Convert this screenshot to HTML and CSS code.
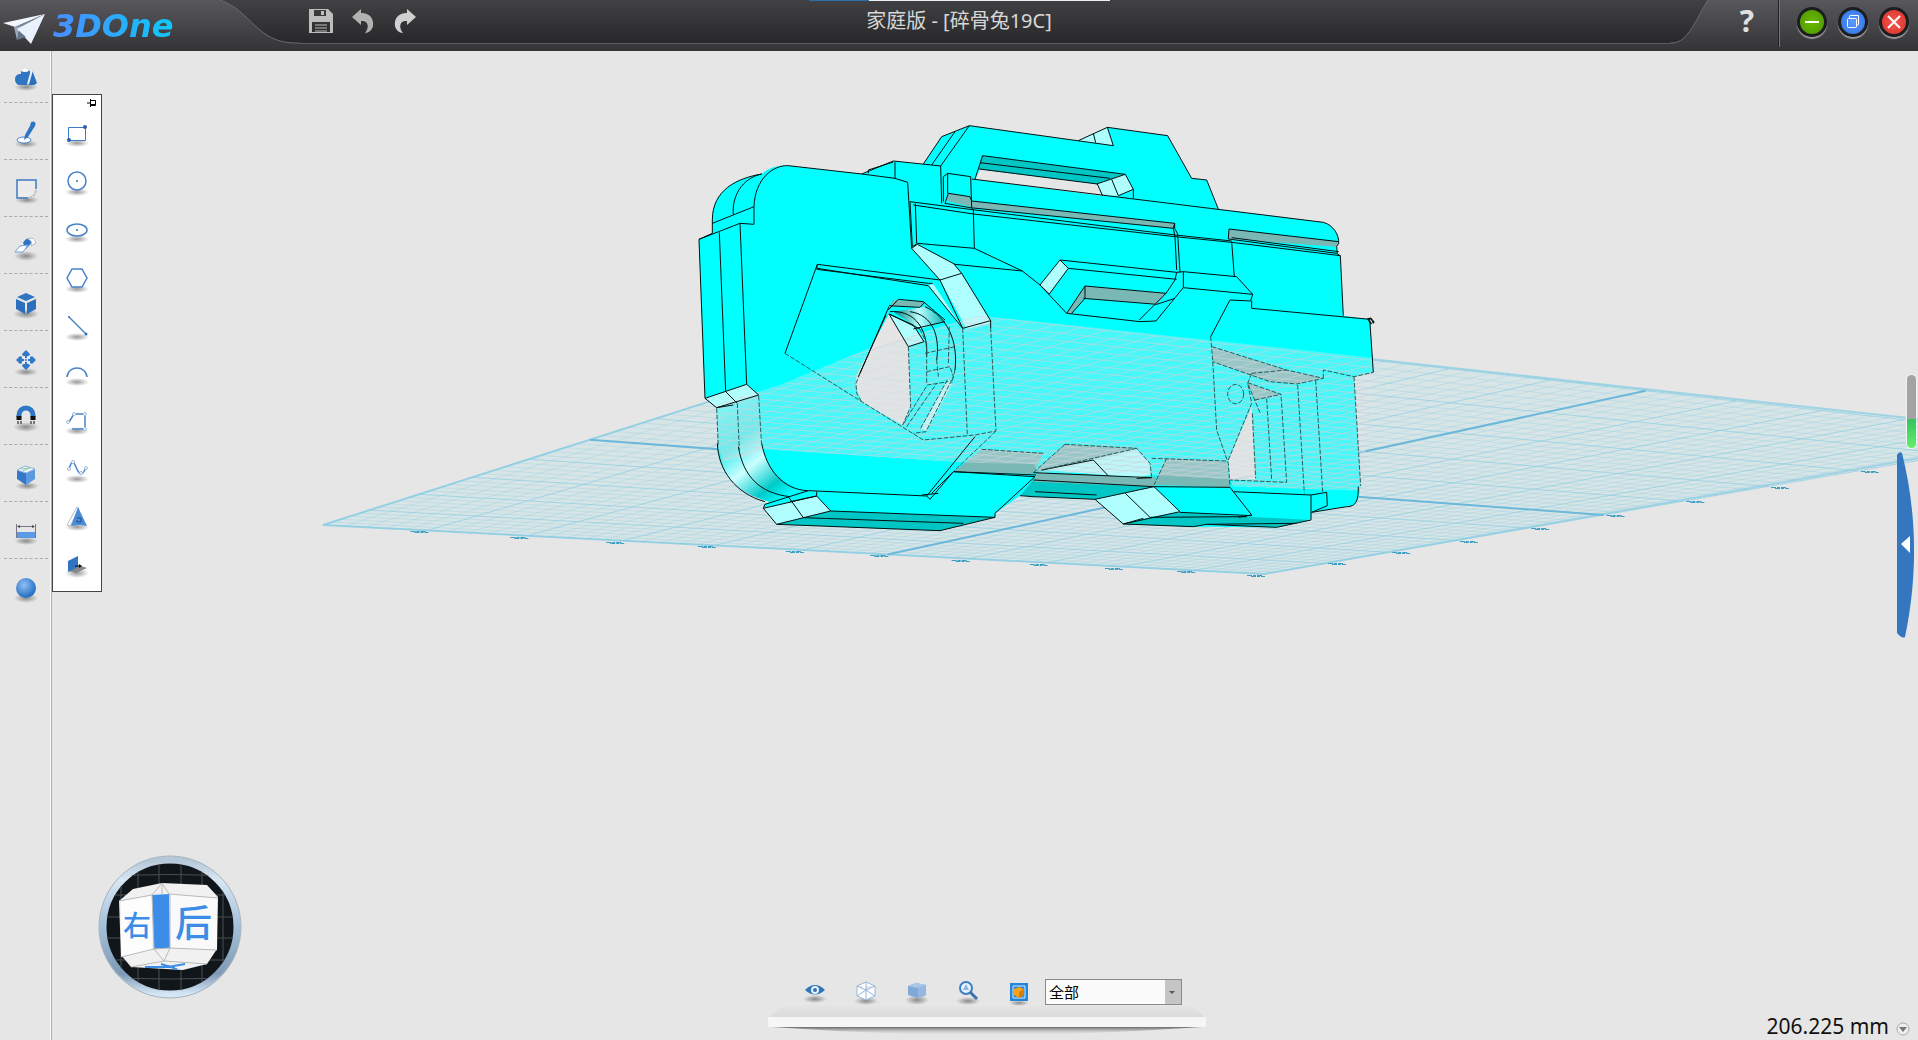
FILE: index.html
```
<!DOCTYPE html>
<html lang="zh-CN">
<head>
<meta charset="utf-8">
<meta name="viewport" content="width=device-width, initial-scale=1">
<title>3DOne 家庭版 - [碎骨兔19C]</title>
<link rel="stylesheet" href="styles.css">
<script src="scene.js" defer></script>
</head>
<body>
<svg class="defs" width="0" height="0" aria-hidden="true">
  <defs>
    <radialGradient id="shade"><stop offset="0" stop-color="#000" stop-opacity=".4"/><stop offset="1" stop-color="#000" stop-opacity="0"/></radialGradient>
    <radialGradient id="ball" cx=".4" cy=".35" r=".6"><stop offset="0" stop-color="#8fc0f5"/><stop offset="1" stop-color="#2a72c4"/></radialGradient>
    <linearGradient id="tab" x2="0" y2="1"><stop offset="0" stop-color="#414143"/><stop offset="1" stop-color="#28282a"/></linearGradient>
  </defs>
</svg>

<header class="topbar">
  <div class="top-left">
    <a class="brand" href="#">
      <svg width="48" height="36" viewBox="0 0 48 36" aria-hidden="true">
        <path d="M3 15 45 6 15 19Z" fill="#f2f5fb"/><path d="M15 19 45 6 19 22 17 32Z" fill="#77879c"/>
        <path d="M14 19 22 18 19 23 17 32Z" fill="#9aa9ba"/><path d="M17 21 45 6 31 36Z" fill="#e9f1fc"/><path d="M17 32 19 23 26 29Z" fill="#66758a"/>
      </svg>
      <span class="brand-name">3DOne</span>
    </a>
    <svg class="curve" width="80" height="51" viewBox="0 0 80 51" aria-hidden="true">
      <path d="M0 0C32 11 36 43 76 43H80V0Z" fill="url(#tab)"/><path d="M0 0C32 11 36 43 76 43H80" fill="none" stroke="#6b6b6e"/>
    </svg>
    <div class="panel tools">
      <button type="button" aria-label="保存"><svg width="26" height="26" viewBox="0 0 26 26"><path fill="#bdbdbd" fill-rule="evenodd" d="M1 1H20L25 6V25H1ZM4 14V24H22V14ZM6 2V8H18V2ZM13 3H16V7H13Z"/><path d="M7 17H19M7 20H19M7 23H19" stroke="#bdbdbd"/></svg></button>
      <button type="button" aria-label="撤销"><svg width="26" height="26" viewBox="0 0 26 26"><path fill="#b2b2b2" d="M2 9 11 1V5C21 5 24 12 23 18 22 22 19 25 15 25 20 19 18 12 11 13V17Z"/></svg></button>
      <button type="button" aria-label="重做"><svg width="26" height="26" viewBox="0 0 26 26"><path fill="#d0d0d0" d="M24 9 15 1V5C5 5 2 12 3 18 4 22 7 25 11 25 6 19 8 12 15 13V17Z"/></svg></button>
    </div>
  </div>
  <h1 class="panel title">家庭版 - [碎骨兔19C]</h1>
  <div class="top-right">
    <div class="panel"></div>
    <svg class="curve" width="38" height="51" viewBox="0 0 38 51" aria-hidden="true">
      <path d="M0 0H38C26 19 18 43 2 43H0Z" fill="url(#tab)"/><path d="M38 0C26 19 18 43 2 43H0" fill="none" stroke="#6b6b6e"/>
    </svg>
    <button type="button" class="help" aria-label="帮助">?</button>
    <div class="window-buttons">
      <button type="button" class="min" aria-label="最小化"><svg width="24" height="24" viewBox="0 0 24 24"><path d="M5 12H19" stroke="#fff" stroke-width="2"/></svg></button>
      <button type="button" class="max" aria-label="还原"><svg width="24" height="24" viewBox="0 0 24 24" fill="none" stroke="#fff"><rect x="6.500" y="8.500" width="9" height="9" rx="1"/><path d="M8.500 8V6.500A1 1 0 0 1 9.500 5.500H17.500V14.500A1 1 0 0 1 16 15"/></svg></button>
      <button type="button" class="close" aria-label="关闭"><svg width="24" height="24" viewBox="0 0 24 24"><path d="M6 6 18 18M18 6 6 18" stroke="#fff" stroke-width="2"/></svg></button>
    </div>
  </div>
  <div class="peek" aria-hidden="true"></div>
</header>

<main class="work">
  <nav class="sidebar" aria-label="工具">
    <button type="button" aria-label="基本实体"><svg class="ic" viewBox="0 0 28 32"><ellipse cx="14" cy="25" rx="12" ry="4" fill="url(#shade)"/><path d="M3 17A5 5 0 0 1 9 12V9Q13 6 18 9V15L15 23H7Q3 22 3 17Z" fill="#2f75c2"/><path d="M9 9Q13 4 17 9Q13 11 9 9Z" fill="#fff"/><path d="M20 8 25 21Q21 25 15 22Z" fill="#2b6fbb"/><path d="M20 8 16 22" stroke="#e9f2fc" stroke-width="2"/></svg></button>
    <button type="button" aria-label="草图绘制"><svg class="ic" viewBox="0 0 28 32"><ellipse cx="14" cy="26" rx="12" ry="4" fill="url(#shade)"/><ellipse cx="12" cy="22" rx="7" ry="3" fill="#fff" stroke="#4a87cc"/><path d="M19 6 23 8 16 19 12 22 13 17Z" fill="#2f75c2"/><circle cx="21" cy="6" r="2.500" fill="#2f75c2"/></svg></button>
    <button type="button" aria-label="草图编辑"><svg class="ic" viewBox="0 0 28 32"><ellipse cx="15" cy="25" rx="12" ry="4" fill="url(#shade)"/><path d="M5 5H23V15Q22 21 16 22H5Z" fill="#ececec"/><path d="M24 14V5H5V23H16" fill="none" stroke="#3c7bc6" stroke-width="1.500"/><path d="M24 15Q23 22 16 23" fill="none" stroke="#c4c4c4" stroke-width="2" stroke-dasharray="3 1"/></svg></button>
    <button type="button" aria-label="特征造型"><svg class="ic" viewBox="0 0 28 32"><ellipse cx="14" cy="24" rx="12" ry="5" fill="url(#shade)"/><path d="M11 11Q15 3 21 9L14 17Z" fill="#2f75c2"/><path d="M16 7Q22 4 24 11L19 14Q21 9 16 7Z" fill="#fff" stroke="#a9bccf"/><path d="M8 14 16 13 11 20 3 20Z" fill="#fff" stroke="#6ea0d5"/></svg></button>
    <button type="button" aria-label="特殊功能"><svg class="ic" viewBox="0 0 28 32"><ellipse cx="14" cy="25" rx="13" ry="5" fill="url(#shade)"/><path d="M14 4 23 8 14 12 5 8Z" fill="#2f75c2"/><path d="M4 10 13 14V25L4 20ZM24 10 15 14V25L24 20Z" fill="#2b6fbe"/></svg></button>
    <button type="button" aria-label="移动"><svg class="ic" viewBox="0 0 28 32"><ellipse cx="14" cy="26" rx="12" ry="4" fill="url(#shade)"/><path d="M14 4 18 8 17 10H15V12H13V10H11L10 8ZM14 24 18 20 17 18H15V16H13V18H11L10 20ZM4 14 8 10 10 11V13H12V15H10V17L8 18ZM24 14 20 10 18 11V13H16V15H18V17L20 18Z" fill="#3479c8"/><circle cx="14" cy="14" r="1" fill="#3479c8"/></svg></button>
    <button type="button" aria-label="自动吸附"><svg class="ic" viewBox="0 0 28 32"><ellipse cx="14" cy="24" rx="13" ry="5" fill="url(#shade)"/><path d="M7 14V12A7 7 0 0 1 21 12V14" fill="none" stroke="#2f78c8" stroke-width="5"/><path d="M7 13V17M21 13V17" stroke="#111" stroke-width="5"/><path d="M6 18V21M9 18V21M19 18V21M22 18V21" stroke="#111"/></svg></button>
    <button type="button" aria-label="组合编辑"><svg class="ic" viewBox="0 0 28 32"><ellipse cx="15" cy="26" rx="12" ry="4" fill="url(#shade)"/><path d="M5 10 14 13V25L5 19Z" fill="#3479c8"/><path d="M14 13 23 9V19L14 25Z" fill="#5b9ae0"/><path d="M5 10 13 6 23 9 14 13Z" fill="#eef4fb" stroke="#8fb4dd"/><path d="M9 9 18 8M11 11 17 8" stroke="#8ca"/></svg></button>
    <button type="button" aria-label="距离测量"><svg class="ic" viewBox="0 0 28 32"><ellipse cx="14" cy="24" rx="12" ry="4" fill="url(#shade)"/><path d="M4 15H24V21H4Z" fill="#5a9be6"/><path d="M4.500 7V21M23.500 7V21M6 9.500H22" stroke="#778"/><path d="M5 9.500 8 8V11ZM23 9.500 20 8V11Z" fill="#445"/></svg></button>
    <button type="button" aria-label="材质渲染"><svg class="ic" viewBox="0 0 28 32"><ellipse cx="14" cy="24" rx="12" ry="5" fill="url(#shade)"/><circle cx="14" cy="14" r="10" fill="url(#ball)"/></svg></button>
  </nav>

  <section class="stage" aria-label="三维视图">
    <svg class="scene" viewBox="52 51 1866 989" preserveAspectRatio="xMidYMid slice" role="img" aria-label="模型">
      <defs>
        <clipPath id="behind"><path d="M97 885 300 825 560 718 890 618 1050 632 2080 743V800L2044 1142 1660 1130 1650 1108 1430 1096 1380 1090 1080 1090 1060 1062 960 1060 870 1058 245 1018 240 1030 130 1054 110 1000Z"/></clipPath>
        <linearGradient id="tube" x1="0" y1="0" x2=".7" y2="1"><stop offset="0" stop-color="#5ff"/><stop offset=".4" stop-color="#3cecec"/><stop offset=".62" stop-color="#cff"/><stop offset=".85" stop-color="#00caca"/><stop offset="1" stop-color="#0ff"/></linearGradient>
        <linearGradient id="grip"><stop offset="0" stop-color="#067e7e"/><stop offset=".5" stop-color="#bff"/><stop offset="1" stop-color="#09b5b5"/></linearGradient>
      </defs>
      <path class="plane" d="M323 525 1264 574 2055 434 977 316Z"/>
      <path class="minor" data-grid="minor"/><path class="major" data-grid="major"/><path class="axis" data-grid="axis"/>
      <g class="ticks" data-grid="ticks"></g>
      <g class="model" transform="translate(680 110) scale(.33333)">
        <path class="c" fill-rule="evenodd" d="M75 865 57 388 97 370V330C97 240 170 205 245 192 270 170 300 165 325 167L545 192 640 153 730 162 785 80 868 47 1195 92 1282 52 1463 77 1535 205 1580 210 1615 297 1930 337C1960 345 1978 375 1976 400L1970 410 1972 432 1981 437 1990 617 2070 628 2080 787 2022 800 2042 1128C2035 1170 2030 1190 2000 1190L1895 1207 1893 1225 1880 1232 1790 1252 1540 1250 1330 1242 1250 1168 1060 1160 1020 1157 945 1210V1222L780 1262 290 1243 250 1185 270 1175C170 1150 115 1080 112 1000L110 895ZM888 205 900 177 1252 222 1268 258 875 207ZM627 612 685 710 692 890 668 945 545 875 528 830 530 795ZM1715 890 1727 1108 1650 1110 1645 1050Z"/>
        <!-- dark undersides -->
        <path class="d" d="M290 1243 370 1223 452 1203 945 1222 780 1262ZM905 137 1336 193 1252 222 895 178ZM1020 1157 1060 1110 1422 1130 1336 1150 1245 1168ZM1330 1242 1410 1222 1500 1207 1700 1220 1893 1230 1790 1252 1580 1243 1540 1250Z"/>
        <!-- gray recesses -->
        <path class="g" d="M805 250 870 260 875 273 1484 340 1480 355 880 293 800 272ZM1647 357 1976 395 1970 410 1645 387ZM1215 528 1458 550 1430 583 1210 565 1175 610 1160 610ZM640 570 735 576 720 590 640 588 625 600ZM822 1085 905 1018 1090 1028 1060 1092ZM1070 1088 1430 1100 1422 1130 1060 1115ZM1460 1043 1640 1055 1650 1132 1422 1125ZM1596 710 1820 780 1930 805 1850 822 1770 815 1598 755ZM1702 818 1803 853 1725 870ZM1155 1003 1370 1015 1225 1060 1060 1088Z"/>
        <!-- lit chamfers -->
        <path class="p" d="M695 415 712 403 820 460 845 490 932 632 932 640 860 657 780 510ZM745 527 758 520 848 655 835 640ZM250 1195 410 1158 452 1203 290 1243ZM1195 92 1282 52 1300 107 1240 98ZM1250 222 1336 193 1360 238 1315 257 1268 258ZM1080 525 1140 450 1165 475 1108 552ZM1248 1168 1422 1130 1500 1205 1410 1222 1330 1242ZM627 612 700 645 732 695 685 710ZM75 865 200 823 236 855 110 893ZM722 955 803 808 817 820 738 965ZM1100 1080 1240 1048 1370 1017 1410 1060 1412 1095 1370 1103Z"/>
        <path d="M110 893 236 858 245 1000C260 1080 310 1130 385 1142L270 1175C170 1150 112 1090 112 1000Z" fill="url(#tube)"/>
        <path d="M640 605 735 590 795 635 720 657Z" fill="url(#grip)"/>
        <!-- the part of the body below the work plane is veiled by the grid -->
        <g clip-path="url(#behind)">
          <path class="veil" d="M57 388H2090V1262H57Z"/>
          <g transform="scale(3) translate(-680 -110)"><path class="over" data-grid="minor"/><path class="over" data-grid="major"/></g>
        </g>
        <path class="hole-veil" fill-rule="evenodd" d="M627 612 685 710 692 890 668 945 545 875 528 830 530 795ZM1715 890 1727 1108 1650 1110 1645 1050Z"/>
        <g class="e">
          <path d="M75 865 57 388 97 370V330C97 240 170 205 245 192M97 340 222 290 222 343 180 340 57 388M160 315C155 260 185 205 245 192M222 290C225 205 280 165 325 167L545 192 645 205 683 217 695 415 780 510M545 192 640 153 782 168 785 280M645 157V205M565 190V180L640 156M730 162 785 80 868 47 1300 107 1282 52 1463 77 1535 205 1580 210 1615 297M755 165 825 65M782 168 868 47M1195 92 1282 52M1240 70 1247 98M885 207 908 137 1336 193 1360 238V265M900 158 1290 205M898 177 1252 222M875 207 1930 337C1960 345 1978 375 1976 400L1970 410 1972 432 1981 437 1990 617"/>
          <path d="M1252 222 1268 258M1295 208 1315 257M1250 222 1336 193M1315 257 1360 238M790 275V200L803 190 872 200 875 293 880 300 883 415M803 190V250M805 250 870 260 875 273 1484 340V355L1493 372 1500 487M805 250 795 280 870 293 1480 355M690 275 870 298 1485 375 1655 393M700 285 880 312 1485 380 1655 397 1981 437M706 280 710 400M690 275 697 410 712 400 883 415 1027 483 825 463 712 403M1484 340 1480 355 1485 380 1490 480M1645 387 1647 357 1976 395M1645 387 1970 430M1655 395 1663 500M1655 383 1976 425M1027 483 1080 525 1160 610 1380 635 1428 633 1510 533 1718 553 1712 573 1650 570 1592 680M1510 533V485L1490 487 1485 510 1458 550 1378 630M1140 450 1490 487M1140 450 1080 525 1108 552 1165 475 1140 450M1165 475 1490 508M1510 485 1670 500 1718 553M1160 610 1215 528 1458 550M1210 565 1430 583 1485 565M1715 573V595L2070 628M1215 528V565L1175 610M2070 640 2080 787"/>
          <path d="M2062 627 2072 625 2081 636 2078 640M2066 630 2074 642" stroke-width="5"/>
          <path d="M118 367 137 845M180 340 200 823 75 865 110 893 236 855 200 823M137 845 172 880M110 893 160 885M315 730 412 463 780 510M412 475 745 527M412 463 410 478 745 520 758 520M745 527 848 655M780 510 848 655 932 632M780 510 845 490 932 632V655M820 460 845 490M695 415 712 403M625 600 655 568 730 575 795 630M627 587 640 588 720 592 735 576M627 612 700 645 732 695 685 710ZM627 590 540 790M618 615 535 800M630 605 C690 600 745 640 740 740M690 605C760 615 780 680 770 750M735 590C800 620 835 690 825 780M700 657 795 635M627 612 720 657"/>
          <path d="M112 1000C115 1080 165 1150 255 1175M175 1010C190 1100 240 1150 330 1160M245 1000C260 1080 310 1140 385 1142L740 1158 885 980M740 1158 750 1168 820 1085M725 1155 775 1150M385 1142 255 1183 250 1195 290 1243 780 1262 945 1222V1210L1065 1100 820 1085 755 1150M250 1195 410 1158 452 1203 290 1243M325 1160 370 1223M330 1175 410 1158V1145M452 1203 945 1222M370 1223 850 1240M820 1085 1068 1095M1020 1157 1060 1160 1245 1168 1422 1130 1500 1205 1330 1242 1245 1168M1336 1150 1410 1222 1700 1220M1422 1130 1060 1110M1422 1130 1650 1132 1715 1215 1675 1222M1500 1207 1715 1217M1330 1242 1540 1250 1580 1243 1790 1252 1893 1230V1155L1940 1147 1942 1187 1895 1207M1660 1145 1893 1155M1330 1242 1390 1225M1580 1243 1850 1240M1895 1207 2000 1190C2030 1190 2035 1170 2035 1130M1060 1088 1415 1103 1370 1105M1085 1080 1240 1050M1240 1050 1285 1098M1065 1145 1250 1155"/>
        </g>
        <g class="e hid">
          <path d="M110 895 115 1010M172 880 178 1020M236 858 245 1010M315 730 545 875 730 990 885 975 948 963 932 655M948 963 820 1085M848 655 862 975M540 790 528 820 530 850 545 875M685 710 692 890 668 945 742 825 805 815M720 657 740 700V820M735 730 825 710M740 785 810 770 820 800 738 965 700 970M770 750 775 800M808 650 805 760M825 780 815 820M722 955 803 808M680 950 770 820M905 1018 1090 1030M1592 680 1598 750 1610 960 1645 1060 1650 1130M1645 1050 1715 880 1703 818 1803 853 1820 1117 1650 1110M1715 790 1703 820 1740 908M1596 710 1820 780 1930 805 1850 822 1770 815 1598 755M1715 790 1820 780M1853 825 1873 1150M1907 810 1928 1145M1930 805V780L2022 800 2080 787M2022 800 2042 1128M1717 910 1727 1105M1760 865 1775 1110M1725 870 1803 853M1155 1003 1370 1015 1410 1060 1415 1100M1155 1003 1060 1088M1370 1015 1085 1080M1415 1045 1640 1053M1460 1045 1422 1125"/>
          <ellipse cx="1667" cy="852" rx="24" ry="29"/>
        </g>
      </g>
    </svg>

    <aside class="palette" aria-label="草图绘制">
      <button type="button" class="pin" aria-label="固定"><svg width="10" height="8" viewBox="0 0 10 8"><path d="M0 4H3M3.500 0V8M4 1.500H8.500V6.500H4M4 5.500H9" fill="none" stroke="#000"/></svg></button>
      <button type="button" aria-label="矩形"><svg class="ic" viewBox="0 0 28 32"><ellipse cx="14" cy="24" rx="12" ry="4" fill="url(#shade)"/><path d="M5.500 8.500H22.500V21.500H5.500Z" fill="#fff" stroke="#3b7dcb"/><circle cx="22" cy="8" r="2" fill="#2e5fae"/><circle cx="6" cy="21" r="2" fill="#2e5fae"/></svg></button>
      <button type="button" aria-label="圆形"><svg class="ic" viewBox="0 0 28 32"><ellipse cx="14" cy="25" rx="12" ry="4" fill="url(#shade)"/><circle cx="14" cy="14" r="9" fill="#fff" stroke="#4a82c8" stroke-width="1.500"/><circle cx="14" cy="14" r="1" fill="#3672b9"/></svg></button>
      <button type="button" aria-label="椭圆形"><svg class="ic" viewBox="0 0 28 32"><ellipse cx="14" cy="24" rx="12" ry="4" fill="url(#shade)"/><ellipse cx="14" cy="15" rx="10" ry="6" fill="#fff" stroke="#4a82c8" stroke-width="1.500"/><circle cx="14" cy="15" r="1" fill="#3672b9"/></svg></button>
      <button type="button" aria-label="正多边形"><svg class="ic" viewBox="0 0 28 32"><ellipse cx="14" cy="26" rx="12" ry="4" fill="url(#shade)"/><path d="M9 6H19L24 15 19 24H9L4 15Z" fill="#fff" stroke="#4a82c8" stroke-width="1.500"/></svg></button>
      <button type="button" aria-label="直线"><svg class="ic" viewBox="0 0 28 32"><ellipse cx="14" cy="26" rx="12" ry="4" fill="url(#shade)"/><path d="M6 6 23 23" stroke="#4a82c8" stroke-width="1.500"/><circle cx="6" cy="6" r="1" fill="#3672b9"/><circle cx="23" cy="23" r="1.500" fill="#3672b9"/></svg></button>
      <button type="button" aria-label="圆弧"><svg class="ic" viewBox="0 0 28 32"><ellipse cx="14" cy="23" rx="12" ry="4" fill="url(#shade)"/><path d="M4 18C5 6 23 6 24 18" fill="none" stroke="#4a82c8" stroke-width="1.500"/></svg></button>
      <button type="button" aria-label="多段线"><svg class="ic" viewBox="0 0 28 32"><ellipse cx="14" cy="24" rx="12" ry="4" fill="url(#shade)"/><path d="M6 15 11 7M13 7H20M22 8V20M20 22H9" fill="none" stroke="#4a82c8" stroke-width="1.500"/><g fill="#fff" stroke="#9fb9d8"><circle cx="5" cy="15" r="1.500"/><circle cx="11" cy="7" r="1.500"/><circle cx="22" cy="7" r="1.500"/><circle cx="22" cy="22" r="1.500"/></g></svg></button>
      <button type="button" aria-label="通过点绘制曲线"><svg class="ic" viewBox="0 0 28 32"><ellipse cx="14" cy="24" rx="12" ry="4" fill="url(#shade)"/><path d="M6 14C9 5 10 5 13 12S18 23 23 13" fill="none" stroke="#4a82c8" stroke-width="1.500"/><g fill="#fff" stroke="#9fb9d8"><circle cx="6" cy="14" r="1.500"/><circle cx="10" cy="7" r="1.500"/><circle cx="18" cy="18" r="1.500"/><circle cx="23" cy="13" r="1.500"/></g></svg></button>
      <button type="button" aria-label="预制文字"><svg class="ic" viewBox="0 0 28 32"><ellipse cx="14" cy="24" rx="12" ry="4" fill="url(#shade)"/><path d="M14 4 4 22 7 23 16 6Z" fill="#fff" stroke="#b4bfcc"/><path d="M15 4 24 23 17 22 8 23Z" fill="#4b8cd6"/><path d="M14 15H18V19H14V17" fill="none" stroke="#1d4f95"/></svg></button>
      <button type="button" aria-label="参考几何体"><svg class="ic" viewBox="0 0 28 32"><ellipse cx="14" cy="22" rx="12" ry="5" fill="url(#shade)"/><path d="M5 20 15 14 24 17 13 22Z" fill="#888"/><path d="M5 10 15 5V16L5 21Z" fill="#2f75c2"/><path d="M12 15H17" stroke="#111"/><path d="M16 13 19 15 16 17Z" fill="#111"/></svg></button>
    </aside>

    <svg class="cube" width="150" height="150" viewBox="0 0 150 150" role="img" aria-label="视图方向: 右 后">
      <defs>
        <linearGradient id="ring" x2="0" y2="1"><stop offset="0" stop-color="#b5c8d8"/><stop offset=".15" stop-color="#d6e6f3"/><stop offset=".5" stop-color="#a3bfd9"/><stop offset=".85" stop-color="#7f9ab6"/><stop offset="1" stop-color="#d4e6f6"/></linearGradient>
        <clipPath id="disc"><circle cx="75" cy="75" r="64"/></clipPath>
      </defs>
      <circle cx="75" cy="75" r="67" fill="#11161b" stroke="url(#ring)" stroke-width="7"/>
      <circle cx="75" cy="75" r="71" fill="none" stroke="#7f8fa0" stroke-opacity=".6"/>
      <g clip-path="url(#disc)" fill="none" stroke="#4a4f54"><path d="M43 8V142M64 8V142M86 8V142M107 8V142M26 20V130M128 20V130M8 25Q75 20 142 25M8 43H142M8 65H142M8 86H142M8 108H142M8 126Q75 128 142 126"/></g>
      <path d="M38 37 67 31 112 33 123 45 122 97 112 112 88 118 36 115 26 103 24 49Z" fill="#f1f1f1"/>
      <path d="M26 49 57 43V98L26 105Z" fill="#fdfdfd"/><path d="M74 42 122 46V98L75 96Z" fill="#fafafa"/>
      <path d="M57 43 74 42 75 96 59 97Z" fill="#3b8de8"/>
      <path d="M24 49 57 43 67 31 74 42 123 46M57 43 59 97 69 109 75 96V42M26 105 59 97 75 96 122 98M36 115 69 109 112 112M67 31V42" fill="none" stroke="#b9b9b9"/>
      <path d="M50 115H80M66 112 82 117M73 115 90 112" stroke="#3b8de8" stroke-width="2"/>
      <text x="28" y="84" font-size="28">右</text><text x="80" y="85" font-size="37">后</text>
    </svg>

    <div class="dock">
      <div class="dock-tools">
        <button type="button" aria-label="查看视图"><svg class="ic" viewBox="0 0 28 32"><ellipse cx="14" cy="23" rx="12" ry="4" fill="url(#shade)"/><path d="M4 14Q14 4 24 14Q14 23 4 14Z" fill="#2f75b8"/><circle cx="14" cy="14" r="4" fill="#eaf4fd"/><circle cx="14" cy="14" r="2" fill="#2f75b8"/></svg></button>
        <button type="button" aria-label="显示模式"><svg class="ic" viewBox="0 0 28 32"><ellipse cx="14" cy="25" rx="12" ry="4" fill="url(#shade)"/><path d="M14 6 23 10V20L14 24 5 20V10ZM5 10 14 14 23 10M14 14V24M14 6V14L5 20M14 14 23 20" fill="#fff" stroke="#93b6dc" stroke-width="1"/></svg></button>
        <button type="button" aria-label="渲染模式"><svg class="ic" viewBox="0 0 28 32"><ellipse cx="14" cy="24" rx="12" ry="5" fill="url(#shade)"/><path d="M5 10 13 7 23 9V19L15 22 5 19Z" fill="#7fa9d9"/><path d="M5 10 13 7 23 9 15 12Z" fill="#a9c7e8"/><path d="M15 12 23 9V19L15 22Z" fill="#94b8e1"/></svg></button>
        <button type="button" aria-label="缩放"><svg class="ic" viewBox="0 0 28 32"><ellipse cx="14" cy="25" rx="12" ry="4" fill="url(#shade)"/><circle cx="12" cy="12" r="6" fill="#e8f2fc" stroke="#3d7fc6" stroke-width="2"/><path d="M12 8 15 14H9Z" fill="#8bb4e0"/><path d="M16 16 23 23" stroke="#3a72b4" stroke-width="3"/></svg></button>
        <button type="button" aria-label="过滤"><svg class="ic" viewBox="0 0 28 32"><ellipse cx="14" cy="27" rx="10" ry="3" fill="url(#shade)"/><path d="M5 7H23V25H5Z" fill="#2485dc"/><path d="M8 10H20V22H8Z" fill="none" stroke="#d6ecff"/><path d="M14 11 19 13V19L14 22 9 19V13Z" fill="#f5a11a"/><path d="M14 16 19 13V19L14 22Z" fill="#d87d0a"/></svg></button>
        <select class="filter" aria-label="选择过滤"><option>全部</option></select>
      </div>
      <svg class="shelf" viewBox="0 0 438 28" preserveAspectRatio="none" aria-hidden="true">
        <defs>
          <linearGradient id="under" x2="0" y2="1"><stop offset="0" stop-color="#6a6a6a"/><stop offset="1" stop-color="#d5d5d5" stop-opacity="0"/></linearGradient>
          <linearGradient id="top" x2="0" y2="1"><stop offset="0" stop-color="#e4e4e4"/><stop offset="1" stop-color="#dadada"/></linearGradient>
        </defs>
        <path d="M14 0H424L438 12H0Z" fill="url(#top)"/><path d="M4 21H434Q219 37 4 21Z" fill="url(#under)"/><path d="M0 11H438V21H0Z" fill="#f6f6f6"/>
      </svg>
    </div>

    <input class="depth" type="range" min="0" max="100" value="40" aria-label="缩放比例">
    <button type="button" class="drawer" aria-label="展开资源库"><svg width="18" height="188" viewBox="0 0 18 188"><path d="M0 4Q2 0 5 2C20 62 21 124 8 186Q5 188 0 182Z" fill="#3576c0"/><path d="M4 93 13 85V102Z" fill="#fff"/></svg></button>
    <div class="status"><output>206.225 mm</output><button type="button" aria-label="单位"><svg width="14" height="14" viewBox="0 0 14 14"><circle cx="7" cy="7" r="6" fill="#eee" stroke="#aaa"/><path d="M3 5H11L7 10Z" fill="#777"/></svg></button></div>
  </section>
</main>
</body>
</html>
```
FILE: styles.css
```
* { box-sizing: border-box; }
body {
  margin: 0;
  height: 100vh;
  display: flex;
  flex-direction: column;
  background: #e6e6e6;
  font-family: "Noto Sans", "Noto Sans CJK SC", sans-serif;
  overflow: hidden;
}
button { padding: 0; border: 0; background: none; font: inherit; cursor: pointer; }
svg { display: block; flex: none; }
.defs { position: absolute; }
.ic { width: 28px; height: 32px; }

.topbar {
  position: relative;
  display: grid;
  grid-template-columns: 1fr auto 1fr;
  height: 51px;
  background: linear-gradient(#58575c, #343335);
}
.top-left, .top-right { display: flex; min-width: 0; }
.panel {
  flex: 1;
  height: 44px;
  background: linear-gradient(#414143, #28282a);
  border-bottom: 1px solid #5d5d5f;
}
.brand { display: flex; width: 220px; align-items: center; gap: 5px; text-decoration: none; }
.brand-name {
  font: italic bold 32px/50px "DejaVu Sans", sans-serif;
  background: linear-gradient(90deg, #4a8cff, #10c8f8);
  background-clip: text;
  color: transparent;
}
.tools { display: flex; align-items: center; gap: 16px; padding: 0 0 2px 8px; }
.title { margin: 0; font-size: 20px; font-weight: 400; line-height: 42px; color: #d8d8d8; }
.help { width: 70px; height: 42px; padding-left: 8px; color: #e0e0e0; font-family: "Open Sans", sans-serif; font-size: 30px; font-weight: 700; line-height: 42px; }
.window-buttons {
  display: flex;
  gap: 11px;
  height: 47px;
  padding: 7px 9px 0 18px;
  border-left: 1px solid #222;
  box-shadow: inset 1px 0 #77777a;
}
.window-buttons button {
  width: 30px;
  height: 30px;
  padding: 0;
  border: 3px solid #1d1e20;
  border-radius: 50%;
  box-shadow: 0 2px 1px #99999b;
}
.min { background: radial-gradient(#6ab800, #4d9700); }
.max { background: radial-gradient(#5c9bff, #2c6ee0); }
.close { background: radial-gradient(#f2564c, #d9322a); }
.peek {
  position: absolute;
  top: 0;
  left: 50%;
  width: 301px;
  height: 1px;
  margin-left: -150px;
  background: linear-gradient(90deg, #2a6fa8 60px, #eee 60px);
}

.work { flex: 1; display: flex; min-height: 0; }
.sidebar {
  width: 52px;
  border-right: 1px solid #a4b3bb;
  box-shadow: inset -1px 0 #fafafa;
}
.sidebar button {
  display: flex;
  justify-content: center;
  align-items: center;
  width: 44px;
  height: 57px;
  margin-left: 4px;
  padding-top: 5px;
  border-bottom: 1px dashed #a3adb3;
}
.sidebar button:first-child { height: 52px; padding-top: 2px; }
.sidebar button:last-child { border: 0; }

.stage { position: relative; flex: 1; overflow: hidden; }
.scene { position: absolute; inset: 0; width: 100%; height: 100%; }
.plane { fill: #7fe0ee; fill-opacity: .13; stroke: #9fd3e4; stroke-width: 2; }
.minor { fill: none; stroke: #8fcddf; stroke-opacity: .32; }
.major { fill: none; stroke: #8acde3; stroke-opacity: .7; }
.axis { fill: none; stroke: #6bb8da; stroke-width: 2; }
.ticks { fill: none; stroke: #3a9fc0; stroke-dasharray: 5 1 3 1; }
.c { fill: #00ffff; }
.d { fill: #00c6c6; }
.g { fill: #7ab8b6; }
.p { fill: #b0ffff; }
.veil { fill: #dfe6e8; fill-opacity: .32; }
.over { fill: none; stroke: #c9d4dc; stroke-opacity: .6; }
.hole-veil { fill: #e4e4e4; fill-opacity: .7; }
.e { fill: none; stroke: #000f0f; stroke-width: 3; }
.hid { stroke: #2c5c5c; stroke-dasharray: 14 5; stroke-width: 3; }

.palette {
  position: absolute;
  top: 43px;
  left: 0;
  width: 50px;
  background: #fff;
  border: 1px solid #444;
}
.palette button { display: flex; justify-content: center; align-items: center; width: 48px; height: 48px; }
.palette .pin { height: 16px; justify-content: flex-end; padding-right: 4px; }

.cube { position: absolute; left: 43px; bottom: 38px; }
.cube text { fill: #3b8de8; font-family: "Noto Sans CJK SC", sans-serif; font-weight: 500; }

.dock { position: absolute; left: 50%; bottom: 6px; width: 438px; margin-left: -217px; }
.dock-tools { position: relative; display: flex; align-items: center; gap: 23px; padding-left: 33px; }
.filter {
  width: 137px;
  height: 26px;
  margin-left: -11px;
  padding: 0 0 0 3px;
  appearance: none;
  border: 1px solid #8a8a8a;
  border-radius: 0;
  background: linear-gradient(90deg, #fbfbfb 119px, #c5c5c5 119px);
  color: #000;
  font: 15px/22px "Noto Sans CJK SC", sans-serif;
}
.dock-tools::after {
  content: "";
  position: absolute;
  right: 31px;
  top: 15px;
  border: 3px solid transparent;
  border-top-color: #555;
  pointer-events: none;
}
.shelf { position: relative; z-index: -1; width: 100%; height: 28px; margin-top: -2px; }

.depth {
  position: absolute;
  top: 324px;
  right: 2px;
  width: 9px;
  height: 73px;
  margin: 0;
  appearance: none;
  writing-mode: vertical-lr;
  border-radius: 5px;
  background: linear-gradient(#a3a3a3 44px, #35c25c 44px, #62ef6c);
  box-shadow: 0 0 1px 1px #f2f2f2;
}
.depth::-webkit-slider-thumb { appearance: none; width: 9px; height: 1px; background: transparent; }
.drawer { position: absolute; top: 400px; right: 3px; }
.status { position: absolute; right: 8px; bottom: 1px; display: flex; align-items: center; gap: 7px; font-size: 21px; line-height: 26px; color: #111; }
.status button { padding-top: 6px; }
```
FILE: scene.js
```
// Perspective projection of the work plane: u runs along the front edge, v along the left edge.
const U = 11, V = 10, SUB = 5;
const left = [323, 525, 1], near = [1264, 574, 1.249], back = [977, 316, 0.69];
function project(u, v) {
  const h = [0, 1].map(i =>
    left[i] * (1 - u - v) + near[i] * near[2] * u + back[i] * back[2] * v);
  const w = (1 - u - v) + near[2] * u + back[2] * v;
  return [(h[0] / w).toFixed(1), (h[1] / w).toFixed(1)];
}
const line = (a, b) => `M${project(...a)}L${project(...b)}`;
const paths = { minor: "", major: "", axis: "" };
for (let i = 0; i <= U * SUB; i++) {
  const kind = i === 6 * SUB ? "axis" : i % SUB ? "minor" : "major";
  paths[kind] += line([i / (U * SUB), 0], [i / (U * SUB), 1]);
}
for (let i = 0; i <= V * SUB; i++) {
  const kind = i === 5 * SUB ? "axis" : i % SUB ? "minor" : "major";
  paths[kind] += line([0, i / (V * SUB)], [1, i / (V * SUB)]);
}
for (const kind of Object.keys(paths)) {
  document.querySelectorAll(`path[data-grid=${kind}]`).forEach(p => p.setAttribute("d", paths[kind]));
}
// Foreshortened scale marks beside the two front edges.
let marks = "";
const mark = (x, y) => {
  const row = Math.round(y) + 0.5;
  marks += `M${x - 9} ${row}h15M${x - 5} ${row + 1}h14`;
};
for (let i = 1; i <= U; i++) { const [x, y] = project(i / U, 0); mark(x - 8, +y + 1); }
for (let i = 1; i < V; i++) { const [x, y] = project(1, i / V); mark(+x + 12, +y); }
document.querySelector("g[data-grid=ticks]").innerHTML = `<path d="${marks}"/>`;
```
